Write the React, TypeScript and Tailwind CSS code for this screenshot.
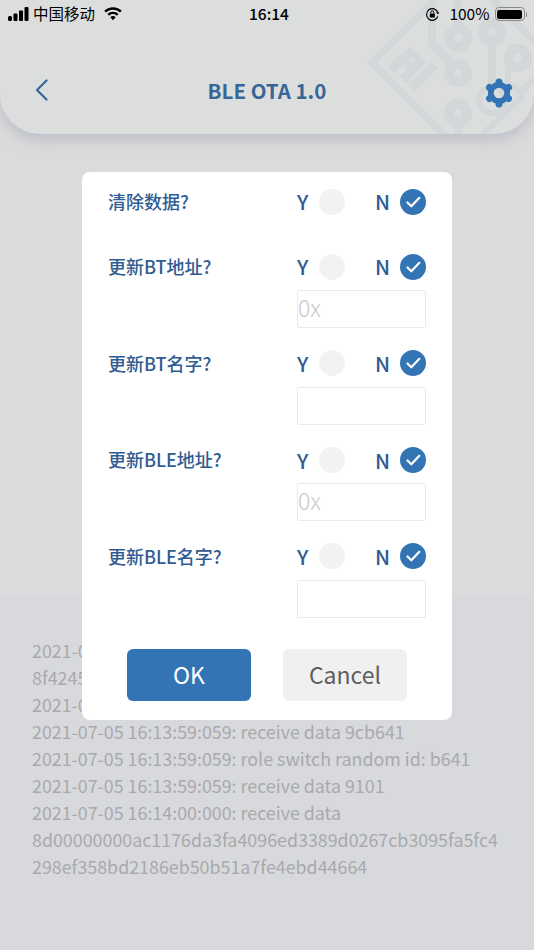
const cjk = "font-['Noto_Sans_CJK_SC','Noto_Sans',sans-serif]";

// the first three lines run on behind the dialog, only their starts can be read
const logLines = [
  '2021-07-05',
  '8f424500',
  '2021-07-05',
  '2021-07-05 16:13:59:059: receive data 9cb641',
  '2021-07-05 16:13:59:059: role switch random id: b641',
  '2021-07-05 16:13:59:059: receive data 9101',
  '2021-07-05 16:14:00:000: receive data',
  '8d00000000ac1176da3fa4096ed3389d0267cb3095fa5fc4',
  '298ef358bd2186eb50b51a7fe4ebd44664',
];

function Signal() {
  return (
    <svg width="21" height="14" viewBox="0 0 21 14" fill="#000">
      <rect x="0" y="9" width="4" height="5" rx="1.5" />
      <rect x="5.5" y="6.5" width="4" height="7.5" rx="1" />
      <rect x="11" y="3.5" width="4" height="10.5" rx="1" />
      <rect x="16.5" y="0" width="4" height="14" rx="1" />
    </svg>
  );
}

function Wifi() {
  return (
    <svg width="18" height="14" viewBox="0 0 19 14" fill="#000">
      <path d="M9.5 0C5.9 0 2.7 1.4 0.3 3.7L2 5.5C4 3.6 6.6 2.4 9.5 2.4s5.5 1.2 7.5 3.1l1.7-1.8C16.3 1.4 13.1 0 9.5 0z" />
      <path d="M9.5 4.6c-2.3 0-4.3.9-5.8 2.4l1.7 1.8c1.1-1 2.5-1.7 4.1-1.7s3 .7 4.1 1.7L15.3 7C13.8 5.5 11.8 4.6 9.5 4.6z" />
      <path d="M9.5 9.2c-1.1 0-2.1.4-2.8 1.1l2.8 3.2 2.8-3.2c-.7-.7-1.7-1.1-2.8-1.1z" />
    </svg>
  );
}

function RotationLock() {
  return (
    <svg width="15" height="15" viewBox="0 0 15 15" fill="none" stroke="#000" strokeWidth="1.2">
      <path d="M12.8 9.5A5.8 5.8 0 1 1 12.8 5.5" />
      <path d="M11.2 5.3h3.2l-1.6 2.2z" fill="#000" stroke="none" />
      <rect x="4.8" y="6.5" width="5" height="4" rx="0.6" fill="#000" stroke="none" />
      <path d="M5.8 6.5V5.3a1.5 1.5 0 0 1 3 0v1.2" strokeWidth="1" />
    </svg>
  );
}

function Battery() {
  return (
    <div className="flex items-center">
      <div className="w-[30px] h-[14px] rounded-[4px] border border-[#8a8a8a] p-[1.5px]">
        <div className="w-full h-full rounded-[2px] bg-black" />
      </div>
      <div className="w-[1.5px] h-[5px] rounded-r-sm bg-[#8a8a8a] ml-[1px]" />
    </div>
  );
}

// faint circuit board watermark behind the header icons
function Watermark() {
  return (
    <svg className="absolute right-0 top-0" width="174" height="134" viewBox="0 0 174 134" fill="none" stroke="#d3d7da" strokeWidth="8">
      <path d="M75 0L12 63l74 74" strokeWidth="7" />
      <path d="M133 0l41 41" strokeWidth="7" />
      <path fillRule="evenodd" stroke="none" fill="#d3d7da" d="M27 67L50 46 66 62 47 83 39 77 47 70 42 66 35 73zM52 56.5l-3.5 3.5 3.5 3.5 3.5-3.5z" />
      <path stroke="none" fill="#d3d7da" d="M47 85L72 62l6 6L55 92z" />
      <path d="M72 0V43L90 63" />
      <path d="M98 0V30" />
      <circle cx="98" cy="38" r="9" strokeWidth="10" />
      <circle cx="98" cy="73" r="9" strokeWidth="10" />
      <circle cx="98" cy="113" r="9" strokeWidth="10" />
      <path d="M98 122v12" />
      <circle cx="132" cy="32" r="9" strokeWidth="10" />
      <path d="M132 41v46" />
      <circle cx="132" cy="100" r="13" strokeWidth="6" />
      <circle cx="158" cy="58" r="9" strokeWidth="10" />
      <path d="M148 58v24l12 10 14-12" strokeWidth="6" />
      <path d="M123 134l40-38" strokeWidth="6" />
    </svg>
  );
}

function Gear() {
  const lobes = [0, 60, 120, 180, 240, 300];
  return (
    <svg width="28" height="30" viewBox="-14 -15 28 30" fill="none" stroke="#3374b5">
      <circle r="8.2" strokeWidth="5.8" />
      {lobes.map((a) => (
        <line
          key={a}
          x1="0"
          y1="-9"
          x2="0"
          y2="-11"
          strokeWidth="7"
          strokeLinecap="round"
          transform={`rotate(${a})`}
        />
      ))}
    </svg>
  );
}

function Choice() {
  return (
    <div className="flex items-center w-[129px] h-[27px]">
      <span className="w-[22px] text-[20.5px] font-medium leading-none text-[#2f5c92]">Y</span>
      <span className="w-[26px] h-[26px] rounded-full bg-[#f1f3f3]" />
      <span className="ml-[30px] w-[25px] text-[20.5px] font-medium leading-none text-[#2f5c92]">N</span>
      <span className="w-[26px] h-[26px] rounded-full bg-[#3374b5] flex items-center justify-center">
        <svg width="15" height="12" viewBox="0 0 15 12" fill="none" stroke="#fff" strokeWidth="2.2" strokeLinecap="round" strokeLinejoin="round">
          <path d="M1.5 6.5l3.8 3.800 8-8.500" />
        </svg>
      </span>
    </div>
  );
}

function Row({ label, input, placeholder }: { label: string; input?: boolean; placeholder?: string }) {
  return (
    <div className="flex justify-between items-start">
      <span className="text-[18px] font-medium leading-[27px] text-[#2f5c92]">{label}</span>
      <div className="flex flex-col gap-[10px]">
        <Choice />
        {input && (
          <div className="w-[129px] h-[38px] rounded-[2px] border-[1.5px] border-[#e8eaf0] bg-white flex items-center pb-[3px] text-[23px] font-light text-[#c9c9cb] leading-none">
            {placeholder}
          </div>
        )}
      </div>
    </div>
  );
}

export default function App() {
  return (
    <div className={`${cjk} relative w-[534px] h-[950px] overflow-hidden bg-[#dbdbdb] flex flex-col`}>
      <div className="relative z-10 h-[134px] rounded-b-[40px] bg-[#dcdedd] shadow-[0_6px_14px_rgba(175,180,192,0.7)] overflow-hidden shrink-0">
        <Watermark />
        <div className="relative h-[28px] flex items-center justify-between pl-[8px] pr-[7px]">
          <div className="flex items-center gap-[4px] text-[15.5px] text-black">
            <Signal />
            <span>中国移动</span>
            <span className="ml-[5px]">
              <Wifi />
            </span>
          </div>
          <span className="absolute left-[249px] top-[2px] text-[15.5px] font-medium text-black">16:14</span>
          <div className="flex items-center gap-[9px] text-[15.5px] text-black">
            <RotationLock />
            <div className="flex items-center gap-[5px]">
              <span>100%</span>
              <Battery />
            </div>
          </div>
        </div>
        <div className="relative mt-[23px] h-[78px] flex items-center justify-between pl-[35px] pr-[21px]">
          <svg width="13" height="22" viewBox="0 0 13 22" fill="none" stroke="#376597" strokeWidth="2.2" strokeLinecap="round" strokeLinejoin="round">
            <path d="M11.5 1.5L2 11l9.5 9.5" />
          </svg>
          <span className="absolute left-0 right-0 text-center text-[20.5px] font-bold text-[#376597]">BLE OTA 1.0</span>
          <span className="mt-[6px]">
            <Gear />
          </span>
        </div>
      </div>

      <div className="h-[461px] shrink-0" />

      <div className="flex-1 bg-[#d8d9dc] pt-[42px] pl-[32px] pr-[20px] text-[17.85px] leading-[27px] text-[#a9a9ad]">
        {logLines.map((line, i) => (
          <div key={i}>{line}</div>
        ))}
      </div>

      <div className="absolute left-[82px] top-[172px] w-[370px] h-[548px] rounded-[8px] bg-white pt-[16px] px-[26px] z-20 flex flex-col">
        <div className="flex flex-col gap-[38px]">
          <Row label="清除数据?" />
          <div className="flex flex-col gap-[21.67px]">
            <Row label="更新BT地址?" input placeholder="0x" />
            <Row label="更新BT名字?" input />
            <Row label="更新BLE地址?" input placeholder="0x" />
            <Row label="更新BLE名字?" input />
          </div>
        </div>
        <div className="flex gap-[32px] mt-[31px] ml-[19px]">
          <div className="w-[124px] h-[52px] rounded-[6px] bg-[#3374b5] flex items-center justify-center pb-[2px] text-[23px] text-white">
            OK
          </div>
          <div className="w-[124px] h-[52px] rounded-[6px] bg-[#f0f0f0] flex items-center justify-center pb-[2px] text-[23px] text-[#5f5f5f]">
            Cancel
          </div>
        </div>
      </div>
    </div>
  );
}
